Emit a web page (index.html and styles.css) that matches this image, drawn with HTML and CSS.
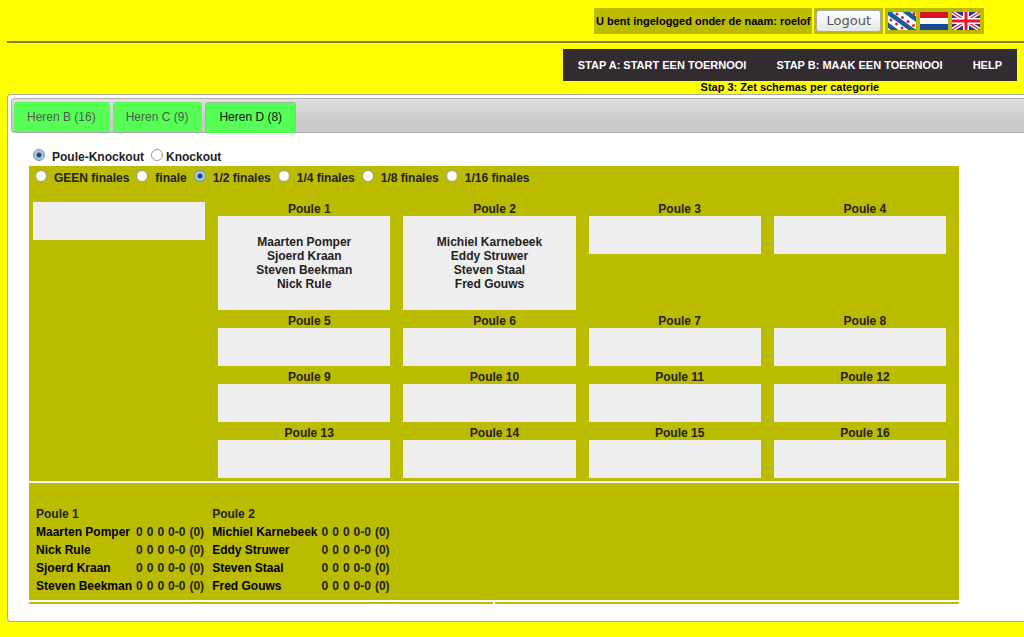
FILE: index.html
```html
<!DOCTYPE html>
<html lang="nl">
<head>
<meta charset="utf-8">
<title>Zet schemas per categorie</title>
<link rel="stylesheet" href="styles.css">
</head>
<body>
<header class="account">
  <div class="cell">U bent ingelogged onder de naam: roelof</div>
  <div class="cell"><button type="button" class="logout">Logout</button></div>
  <div class="cell flags">
    <a href="#fy" aria-label="Frysk"><svg viewBox="0 0 28 18"><rect width="28" height="18" fill="#fff"/><path d="M-2 -1L27 20M14 -3L32 10M-4 10L12 22" stroke="#1c5a9c" stroke-width="4.5"/><path d="M0 0h5l-1 2-4-1zM28 18h-5l1-2 4 1z" fill="#176e74"/><g fill="#d6203c"><circle cx="9" cy="2" r="1.5"/><circle cx="14.500" cy="5.500" r="1.500"/><circle cx="20" cy="9.500" r="1.500"/><circle cx="25.500" cy="13.500" r="1.500"/><circle cx="26" cy="1.500" r="1.500"/><circle cx="21" cy="5" r="0"/><circle cx="3" cy="8" r="1.500"/><circle cx="8.500" cy="12" r="1.500"/><circle cx="14" cy="16" r="1.500"/></g></svg></a>
    <a href="#nl" aria-label="Nederlands"><svg viewBox="0 0 28 18"><path fill="#d8141e" d="M0 0h28v6H0z"/><path fill="#fff" d="M0 6h28v6H0z"/><path fill="#174a91" d="M0 12h28v6H0z"/></svg></a>
    <a href="#en" aria-label="English"><svg viewBox="0 0 28 18"><path fill="#30308e" d="M0 0h28v18H0z"/><path d="M0 0l28 18M28 0L0 18" stroke="#fff" stroke-width="4"/><path d="M0 0l28 18M28 0L0 18" stroke="#e3223c" stroke-width="1.3"/><path d="M14 0v18M0 9h28" stroke="#fff" stroke-width="6"/><path d="M14 0v18M0 9h28" stroke="#e8162c" stroke-width="3"/></svg></a>
  </div>
</header>
<div class="top">
  <div class="menu-block">
    <nav class="menu"><a href="#a">STAP A: START EEN TOERNOOI</a><a href="#b">STAP B: MAAK EEN TOERNOOI</a><a href="#help">HELP</a></nav>
    <h1 class="step">Stap 3: Zet schemas per categorie</h1>
  </div>
</div>
<main class="tabs">
  <nav class="tab-bar">
    <a class="tab" href="#b16">Heren B (16)</a>
    <a class="tab" href="#c9">Heren C (9)</a>
    <a class="tab active" href="#d8">Heren D (8)</a>
  </nav>
  <section class="content">
    <div class="types">
      <label class="option"><input type="radio" name="type" checked>Poule-Knockout</label>
      <label class="option close"><input type="radio" name="type">Knockout</label>
    </div>
    <div class="scheme">
      <div class="finals">
        <label class="option"><input type="radio" name="final">GEEN finales</label>
        <label class="option"><input type="radio" name="final">finale</label>
        <label class="option"><input type="radio" name="final" checked>1/2 finales</label>
        <label class="option"><input type="radio" name="final">1/4 finales</label>
        <label class="option"><input type="radio" name="final">1/8 finales</label>
        <label class="option"><input type="radio" name="final">1/16 finales</label>
      </div>
      <div class="pools">
        <div class="unassigned"><div class="box"></div></div>
        <div><h2>Poule 1</h2><div class="box">Maarten Pomper<br>Sjoerd Kraan<br>Steven Beekman<br>Nick Rule</div></div>
        <div><h2>Poule 2</h2><div class="box">Michiel Karnebeek<br>Eddy Struwer<br>Steven Staal<br>Fred Gouws</div></div>
        <div><h2>Poule 3</h2><div class="box"></div></div>
        <div><h2>Poule 4</h2><div class="box"></div></div>
        <div><h2>Poule 5</h2><div class="box"></div></div>
        <div><h2>Poule 6</h2><div class="box"></div></div>
        <div><h2>Poule 7</h2><div class="box"></div></div>
        <div><h2>Poule 8</h2><div class="box"></div></div>
        <div><h2>Poule 9</h2><div class="box"></div></div>
        <div><h2>Poule 10</h2><div class="box"></div></div>
        <div><h2>Poule 11</h2><div class="box"></div></div>
        <div><h2>Poule 12</h2><div class="box"></div></div>
        <div><h2>Poule 13</h2><div class="box"></div></div>
        <div><h2>Poule 14</h2><div class="box"></div></div>
        <div><h2>Poule 15</h2><div class="box"></div></div>
        <div><h2>Poule 16</h2><div class="box"></div></div>
      </div>
    </div>
    <div class="standings">
      <table class="standing">
        <caption>Poule 1</caption>
        <tr><th scope="row">Maarten Pomper</th><td>0</td><td>0</td><td>0</td><td>0-0</td><td>(0)</td></tr>
        <tr><th scope="row">Nick Rule</th><td>0</td><td>0</td><td>0</td><td>0-0</td><td>(0)</td></tr>
        <tr><th scope="row">Sjoerd Kraan</th><td>0</td><td>0</td><td>0</td><td>0-0</td><td>(0)</td></tr>
        <tr><th scope="row">Steven Beekman</th><td>0</td><td>0</td><td>0</td><td>0-0</td><td>(0)</td></tr>
      </table>
      <table class="standing">
        <caption>Poule 2</caption>
        <tr><th scope="row">Michiel Karnebeek</th><td>0</td><td>0</td><td>0</td><td>0-0</td><td>(0)</td></tr>
        <tr><th scope="row">Eddy Struwer</th><td>0</td><td>0</td><td>0</td><td>0-0</td><td>(0)</td></tr>
        <tr><th scope="row">Steven Staal</th><td>0</td><td>0</td><td>0</td><td>0-0</td><td>(0)</td></tr>
        <tr><th scope="row">Fred Gouws</th><td>0</td><td>0</td><td>0</td><td>0-0</td><td>(0)</td></tr>
      </table>
    </div>
    <div class="footer-cells"><span></span><span></span></div>
  </section>
</main>
</body>
</html>
```
FILE: styles.css
```css
* { box-sizing: border-box; }
body {
  margin: 0;
  padding: 8px 0 8px 7px;
  background: #ff0;
  color: #000;
  font: bold 11px/14px "Liberation Sans", Arial, sans-serif;
}
a { text-decoration: none; }
.account {
  display: flex;
  justify-content: flex-end;
  gap: 2px;
  padding: 0 40px 7px 0;
  border-bottom: 2px solid #84841c;
}
.cell {
  display: flex;
  align-items: center;
  height: 26px;
  padding: 0 2px;
  background: #bb0;
}
.logout {
  height: 22px;
  padding: 0 9px;
  border: 1px solid #aaa;
  border-radius: 3px;
  background: linear-gradient(#fff, #e6e6e6);
  color: #555;
  font: 13px/18px "DejaVu Sans", sans-serif;
}
.flags { gap: 4px; padding: 0 4px 0 3px; }
.flags svg { display: block; width: 28px; height: 18px; }
.top { display: flex; justify-content: flex-end; padding: 6px 7px 0 0; }
.menu { display: flex; background: #302c30; }
.menu a { padding: 9px 15px; color: #fff; }
.step { margin: 0; font-size: 11px; line-height: 13px; text-align: center; }
.tabs {
  padding: 3px 0 3px 3px;
  border: 1px solid #aaa;
  border-right: 0;
  border-radius: 4px 0 0 4px;
  background: #fff;
  color: #222;
  font-size: 12px;
}
.tab-bar {
  display: flex;
  gap: 3px;
  padding: 3px 2px 0;
  border: 1px solid #aaa;
  border-right: 0;
  border-radius: 4px 0 0 4px;
  background: linear-gradient(#e0e0e0, #c8c8c8 70%, #ccc);
}
.tab {
  padding: 8px 14px 8px 13px;
  border-radius: 3px 3px 0 0;
  background: #5f5;
  color: #555;
  font-weight: normal;
}
.tab.active {
  margin-bottom: -1px;
  border: 1px solid #9b9;
  border-bottom: 0;
  padding: 7px 13px 8px;
  color: #111;
}
.content { margin: 0 65px 0 18px; padding: 14px 0; }
.types, .finals { display: flex; gap: 7px; }
.types { padding: 2px 4px 1px; }
.option { display: flex; align-items: flex-start; gap: 7px; line-height: 16px; }
.close { gap: 3px; }
input {
  appearance: none;
  width: 12px;
  height: 12px;
  margin: 0;
  border: 1px solid #999;
  border-radius: 50%;
  background: #fff;
}
input:checked {
  border-color: #7890aa;
  background: radial-gradient(circle, #234d70 0 2px, #a8c8e8 3px);
}
.scheme { background: #bb0; }
.finals { padding: 4px 6px 16px; }
.pools {
  display: grid;
  grid-template-columns: repeat(5, 1fr);
  gap: 4px 13px;
  padding: 0 13px 3px 4px;
  text-align: center;
}
.pools h2 { margin: 0; padding-left: 10px; font-size: 12px; }
.unassigned { grid-row: span 4; }
.box { min-height: 38px; padding: 19px 0; background: #eee; }
.standings {
  display: flex;
  gap: 3px;
  margin-top: 2px;
  padding: 21px 5px 4px;
  background: #bb0;
}
.standing { border-spacing: 1px; }
.standing caption { padding: 2px 2px 1px; text-align: left; line-height: 16px; }
.standing th, .standing td { padding: 1px 2px 1px 1px; line-height: 15px; }
.standing th { color: #000; text-align: left; }
.footer-cells { display: grid; grid-template-columns: 1fr 1fr; gap: 2px; margin-top: 2px; }
.footer-cells span { height: 2px; background: #bb0; }
```
